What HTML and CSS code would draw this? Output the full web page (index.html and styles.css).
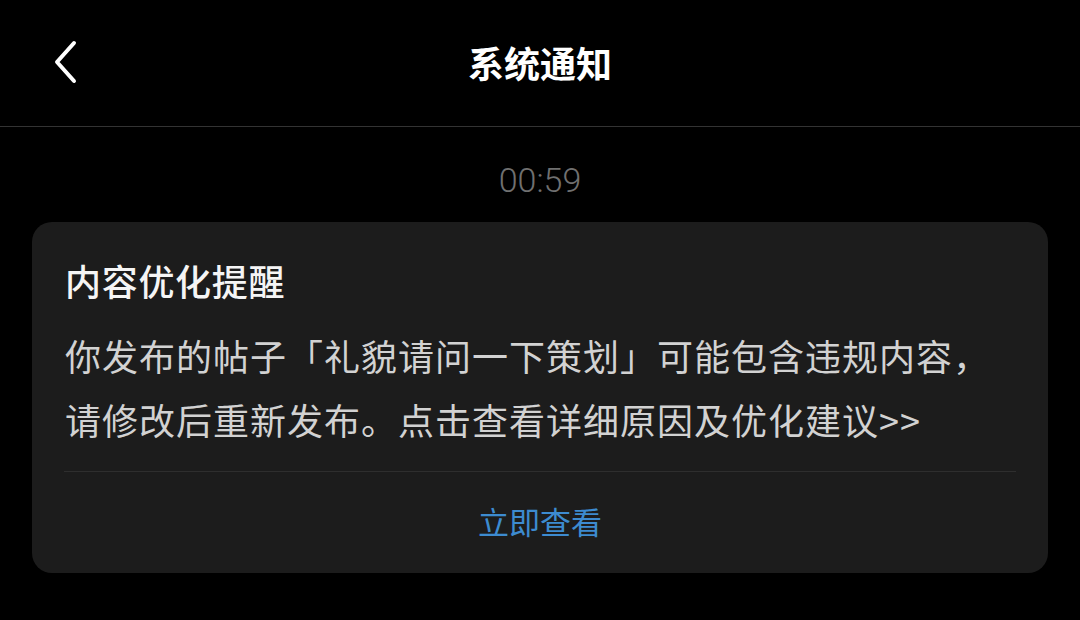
FILE: index.html
```html
<!DOCTYPE html>
<html lang="zh-CN">
<head>
    <meta charset="UTF-8">
    <meta name="viewport" content="width=device-width, initial-scale=1.0">
    <title>系统通知</title>
    <link rel="stylesheet" href="styles.css">
</head>
<body>
    <header class="topbar">
        <a class="back" href="#">
            <svg width="28" height="44" viewBox="0 0 28 44">
                <path d="M22 3 L5 22 L22 41" fill="none" stroke="#fff" stroke-width="4" stroke-linecap="round" stroke-linejoin="round"/>
            </svg>
        </a>
        <h1>系统通知</h1>
        <span></span>
    </header>
    <main class="feed">
        <div class="time">00:59</div>
        <div class="card">
            <h2>内容优化提醒</h2>
            <p class="msg">你发布的帖子「礼貌请问一下策划」可能包含违规内容，<br>请修改后重新发布。点击查看详细原因及优化建议&gt;&gt;</p>
            <div class="divider"></div>
            <a class="action" href="#">立即查看</a>
        </div>
    </main>
</body>
</html>
```
FILE: styles.css
```css
* { margin: 0; padding: 0; box-sizing: border-box; }
body {
    font-family: "Noto Sans CJK SC", "Noto Sans", sans-serif;
    background: #000;
    color: #fff;
    width: 1080px;
    height: 620px;
    overflow: hidden;
}
.topbar {
    height: 127px;
    border-bottom: 1px solid #333;
    display: grid;
    grid-template-columns: 1fr auto 1fr;
    align-items: center;
    padding-bottom: 2px;
}
.back {
    display: flex;
    padding-left: 52px;
}
.topbar h1 {
    font-size: 36px;
    font-weight: 700;
    color: #fff;
    line-height: 50px;
}
.time {
    margin-top: 33px;
    text-align: center;
    font-family: Roboto, "Noto Sans", sans-serif;
    font-size: 34px;
    font-weight: 300;
    line-height: 40px;
    color: #707070;
}
.card {
    margin: 22px 32px 0;
    background: #1c1c1c;
    border-radius: 20px;
    padding-top: 33px;
}
.card h2 {
    font-size: 36px;
    font-weight: 500;
    letter-spacing: 0.7px;
    line-height: 50px;
    color: #f5f5f5;
    padding: 0 33px;
}
.msg {
    margin-top: 18px;
    padding: 0 33px;
    font-size: 36px;
    letter-spacing: 1px;
    line-height: 64px;
    color: #d2d2d2;
    white-space: nowrap;
}
.divider {
    margin: 20px 32px 0;
    height: 1px;
    background: #2e2e2e;
}
.action {
    display: flex;
    align-items: center;
    justify-content: center;
    height: 101px;
    font-size: 31px;
    color: #3d8bd0;
    text-decoration: none;
    padding-bottom: 4px;
}
```
